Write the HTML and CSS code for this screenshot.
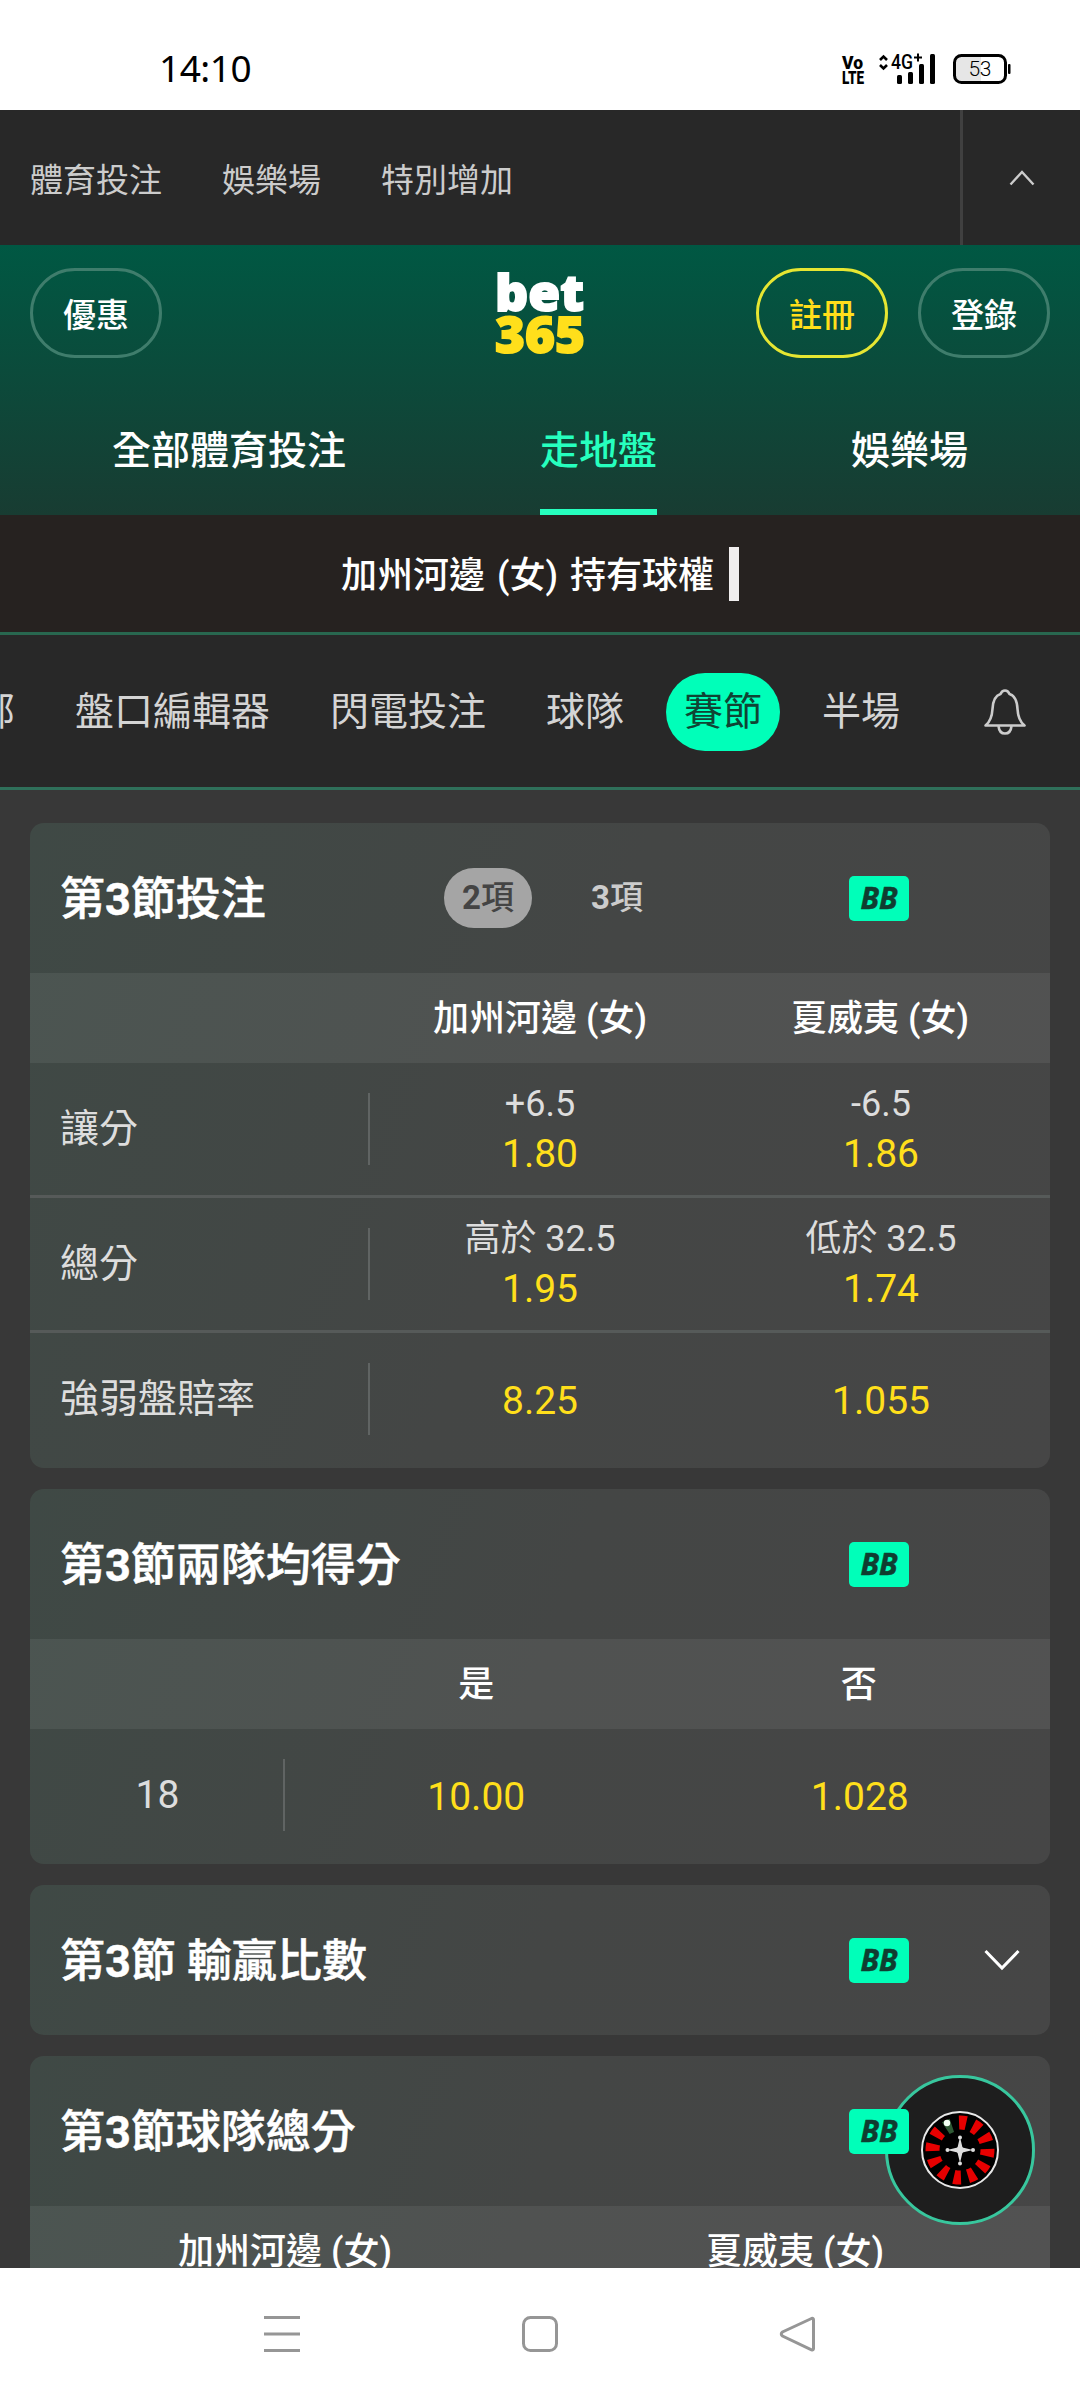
FILE: index.html
```html
<!DOCTYPE html>
<html lang="zh-Hant">
<head>
  <meta charset="UTF-8" />
  <title>bet365 走地盤</title>
  <link rel="stylesheet" href="styles.css">
</head>
<body>
  <div class="status-bar">
    <span class="time">14:10</span>
    <svg class="status-icons" width="170" height="34" viewBox="0 0 170 34">
      <g font-family="Roboto" font-weight="900" font-size="19">
        <text x="1" y="17" textLength="21" lengthAdjust="spacingAndGlyphs">Vo</text>
        <text x="1" y="32" textLength="22" lengthAdjust="spacingAndGlyphs">LTE</text>
      </g>
      <path d="M39 8l3.500-3.500 3.500 3.500M39 13l3.500 3.500 3.500-3.500" fill="none" stroke="#000" stroke-width="2.600" />
      <text x="50" y="17" font-family="Roboto" font-weight="500" font-size="20" textLength="22" lengthAdjust="spacingAndGlyphs">4G</text>
      <path d="M77 1.500v8M73 5.500h8" stroke="#000" stroke-width="2" />
      <rect x="56" y="23" width="5" height="9" rx="1.500" />
      <rect x="67" y="20" width="5" height="12" rx="1.500" />
      <rect x="78" y="12" width="5" height="20" rx="1.500" />
      <rect x="89" y="2" width="5" height="30" rx="1.500" />
      <path d="M120 4h20v26h-20q-5 0-5-5v-16q0-5 5-5z" fill="#e6e6e6" />
      <rect x="113.500" y="3.500" width="51" height="27" rx="7" fill="none" stroke="#000" stroke-width="3" />
      <rect x="167" y="12" width="2.500" height="10" rx="1" />
      <text x="127.500" y="24" font-family="Roboto" font-weight="300" font-size="21" textLength="23">53</text>
    </svg>
  </div>

  <nav class="site-nav">
    <a class="site-link">體育投注</a>
    <a class="site-link">娛樂場</a>
    <a class="site-link">特別增加</a>
    <div class="site-toggle">
      <svg width="26" height="16" viewBox="0 0 26 16"><path d="M1.500 14.500L13 2l11.500 12.500" fill="none" stroke="#ccc" stroke-width="2.400" /></svg>
    </div>
  </nav>

  <header class="header">
    <div class="header-top">
      <button class="btn">優惠</button>
      <svg class="logo" width="92" height="90" viewBox="0 0 92 90">
        <text x="1" y="42.500" fill="#fff" stroke="#fff" textLength="89" lengthAdjust="spacingAndGlyphs">bet</text>
        <text x="1" y="84.500" fill="#ffdf1b" stroke="#ffdf1b" textLength="90" lengthAdjust="spacingAndGlyphs">365</text>
      </svg>
      <div class="account">
        <button class="btn btn-join">註冊</button>
        <button class="btn">登錄</button>
      </div>
    </div>
    <div class="tabs">
      <a class="tab">全部體育投注</a>
      <a class="tab active">走地盤</a>
      <a class="tab">娛樂場</a>
    </div>
  </header>

  <div class="ticker">
    <span class="ticker-text">加州河邊 (女) 持有球權</span>
    <span class="cursor"></span>
  </div>

  <nav class="markets-nav">
    <a class="market-link">全部</a>
    <a class="market-link">盤口編輯器</a>
    <a class="market-link">閃電投注</a>
    <a class="market-link">球隊</a>
    <a class="market-link active">賽節</a>
    <a class="market-link">半場</a>
    <svg class="bell" width="42" height="46" viewBox="0 0 42 46">
      <path d="M1.500 36.500C6 33 8 29 8.500 20 9 10.500 11.500 6.500 16.500 5 17.500 2.500 19 1.500 21 1.500s3.500 1 4.500 3.500c5 1.500 7.500 5.500 8 15 .5 9 2.500 13 7 16.500z" />
      <path d="M14.500 37c.5 5 3 7.500 6.500 7.500s6-2.500 6.500-7.500" />
    </svg>
  </nav>

  <main class="markets">
    <section class="card">
      <div class="card-head">
        <h2>第<b>3</b>節投注</h2>
        <div class="switch">
          <span class="option selected"><b>2</b>項</span>
          <span class="option"><b>3</b>項</span>
        </div>
        <span class="bb">BB</span>
      </div>
      <div class="row row-head">
        <span></span>
        <span>加州河邊 (女)</span>
        <span>夏威夷 (女)</span>
      </div>
      <div class="row line">
        <div class="label">讓分</div>
        <div class="cell"><span class="handicap">+6.5</span><span class="odds">1.80</span></div>
        <div class="cell"><span class="handicap">-6.5</span><span class="odds">1.86</span></div>
      </div>
      <div class="row line">
        <div class="label">總分</div>
        <div class="cell"><span class="handicap">高於 32.5</span><span class="odds">1.95</span></div>
        <div class="cell"><span class="handicap">低於 32.5</span><span class="odds">1.74</span></div>
      </div>
      <div class="row">
        <div class="label">強弱盤賠率</div>
        <div class="cell"><span class="odds">8.25</span></div>
        <div class="cell"><span class="odds">1.055</span></div>
      </div>
    </section>

    <section class="card">
      <div class="card-head">
        <h2>第<b>3</b>節兩隊均得分</h2>
        <span class="bb">BB</span>
      </div>
      <div class="row row-head narrow">
        <span></span>
        <span>是</span>
        <span>否</span>
      </div>
      <div class="row narrow">
        <div class="label center">18</div>
        <div class="cell"><span class="odds">10.00</span></div>
        <div class="cell"><span class="odds">1.028</span></div>
      </div>
    </section>

    <section class="card">
      <div class="card-head">
        <h2>第<b>3</b>節 輸贏比數</h2>
        <span class="bb">BB</span>
        <svg class="expand" width="36" height="22" viewBox="0 0 36 22"><path d="M1.500 2L18 19 34.500 2" fill="none" stroke="#fff" stroke-width="3" /></svg>
      </div>
    </section>

    <section class="card">
      <div class="card-head">
        <h2>第<b>3</b>節球隊總分</h2>
        <span class="bb">BB</span>
      </div>
      <div class="row row-head two">
        <span>加州河邊 (女)</span>
        <span>夏威夷 (女)</span>
      </div>
    </section>
  </main>

  <!-- floating casino button -->
  <div class="roulette">
    <svg width="80" height="80" viewBox="-40 -40 80 80">
      <circle r="38" fill="#000" stroke="#e8e8e8" stroke-width="2" />
      <circle r="27.500" fill="none" stroke="#e60000" stroke-width="14" pathLength="12" stroke-dasharray=".5 .5" transform="rotate(-2)" />
      <circle r="27.500" fill="none" stroke="#000" stroke-width="15" pathLength="12" stroke-dasharray=".9 11.100" transform="rotate(232)" />
      <circle r="26" fill="none" stroke="#2f5a35" stroke-width="14" pathLength="12" stroke-dasharray=".5 11.500" transform="rotate(237)" />
      <circle cx="-13" cy="-27" r="3.200" fill="#f4fff4" />
      <path d="M0-13L2.500-2.500 13 0 2.500 2.500 0 13-2.500 2.500-13 0-2.500-2.500z" fill="#ddd" />
      <g fill="#ddd">
        <circle cy="-12.500" r="2" />
        <circle cy="13.500" r="2" />
        <circle cx="-12.500" r="2" />
        <circle cx="13" r="2" />
        <circle r="3.500" />
      </g>
    </svg>
  </div>

  <footer class="system-nav">
    <svg width="36" height="36" viewBox="0 0 36 36"><path d="M0 1.500h36M0 18h36M0 34.500h36" /></svg>
    <svg width="36" height="36" viewBox="0 0 36 36"><rect x="1.500" y="1.500" width="33" height="33" rx="7" /></svg>
    <svg width="36" height="36" viewBox="0 0 36 36"><path d="M31.500 2.500L2.500 16q-2.500 2 0 4L31.500 33.800q2 .7 2-1.300V3.800q0-2-2-1.300z" /></svg>
  </footer>
</body>
</html>
```

FILE: styles.css
```css
* {
  box-sizing: border-box;
}

body {
  margin: 0;
  width: 1080px;
  height: 2400px;
  overflow: hidden;
  display: flex;
  flex-direction: column;
  background-color: #383838;
  font-family: Roboto, "Noto Sans CJK TC", sans-serif;
  color: #fff;
}

svg {
  display: block;
  overflow: visible;
}

b {
  font-weight: 700;
}

.status-bar {
  flex: none;
  height: 110px;
  padding: 28px 69px 0 159px;
  display: flex;
  justify-content: space-between;
  align-items: center;
  background-color: #fff;
  color: #000;
}

.time {
  padding-bottom: 4px;
  font-family: "Noto Sans", sans-serif;
  font-size: 37px;
  letter-spacing: -0.5px;
}

.site-nav {
  flex: none;
  height: 135px;
  padding-left: 30px;
  display: flex;
  align-items: center;
  gap: 60px;
  background-color: #282828;
  color: #ccc;
  font-size: 33px;
}

.site-toggle {
  width: 120px;
  height: 135px;
  margin-left: auto;
  border-left: 3px solid #404040;
  display: flex;
  align-items: center;
  justify-content: center;
}

.header {
  flex: none;
  height: 270px;
  padding-top: 23px;
  display: flex;
  flex-direction: column;
  justify-content: space-between;
  background: linear-gradient(#005843, #183c32);
}

.header-top {
  padding: 0 30px;
  display: grid;
  grid-template-columns: 1fr 92px 1fr;
}

.btn {
  width: 132px;
  height: 90px;
  padding: 0 0 1px;
  border: 3px solid #3f7d6c;
  border-radius: 45px;
  background: none;
  color: #fff;
  font-family: inherit;
  font-size: 33px;
  font-weight: 500;
}

.btn-join {
  border-color: #e6e632;
  color: #ffdf1b;
}

.logo {
  font-family: "Open Sans", sans-serif;
  font-size: 50px;
  font-weight: 800;
  stroke-width: 1.800;
}

.account {
  display: flex;
  justify-content: flex-end;
  gap: 30px;
}

.tabs {
  padding: 0 112px;
  display: flex;
  justify-content: space-between;
}

.tab {
  height: 130px;
  line-height: 132px;
  font-size: 39px;
  font-weight: 500;
}

.tab.active {
  color: #26ffbe;
  border-bottom: 6px solid #26ffbe;
}

.ticker {
  flex: none;
  height: 120px;
  display: flex;
  align-items: center;
  justify-content: center;
  gap: 15px;
  background-color: #262220;
  border-bottom: 3px solid #28674f;
  font-size: 36px;
  font-weight: 500;
}

.ticker-text {
  padding-bottom: 3px;
  word-spacing: 3px;
}

.cursor {
  width: 10px;
  height: 54px;
  background-color: #f0eeee;
}

.markets-nav {
  flex: none;
  height: 155px;
  padding: 2px 54px 0 0;
  margin-left: -81px;
  display: flex;
  align-items: center;
  gap: 24px;
  background-color: #282828;
  border-bottom: 3px solid #2f705a;
  color: #d4d4d4;
  font-size: 39px;
}

.market-link {
  height: 78px;
  line-height: 78px;
  padding: 0 18px;
  border-radius: 39px;
}

.market-link.active {
  background-color: #00ffb9;
  color: #0f4434;
}

.bell {
  margin-left: auto;
  fill: none;
  stroke: #ccc;
  stroke-width: 2.600;
  stroke-linejoin: round;
}

.markets {
  height: 1478px;
  padding: 33px 30px 0;
  overflow: hidden;
  display: flex;
  flex-direction: column;
  gap: 21px;
}

.card {
  flex: none;
  border-radius: 14px;
  background: linear-gradient(110deg, #3f4945, #444645 50%, #464646);
  overflow: hidden;
}

.card-head {
  position: relative;
  height: 150px;
  padding: 0 30px;
  display: flex;
  align-items: center;
}

.card-head h2 {
  width: 384px;
  margin: 0;
  padding-bottom: 5px;
  font-size: 45px;
  font-weight: 500;
  -webkit-text-stroke: 0.5px;
  white-space: nowrap;
}

.switch {
  display: flex;
  gap: 41px;
  font-size: 33px;
  font-weight: 500;
  color: #ccc;
}

.option {
  height: 60px;
  line-height: 60px;
  padding: 0 18px;
  border-radius: 30px;
}

.option.selected {
  background-color: #a5a5a5;
  color: #444;
}

.bb {
  width: 60px;
  height: 45px;
  margin-left: auto;
  margin-right: 111px;
  border-radius: 5px;
  background-color: #00ffb9;
  color: #0f3d30;
  font-family: "Open Sans", sans-serif;
  font-size: 30px;
  font-weight: 700;
  font-style: italic;
  line-height: 44px;
  text-align: center;
  -webkit-text-stroke: 0.5px;
}

.expand {
  position: absolute;
  right: 30px;
  top: 64px;
}

.row {
  height: 135px;
  display: grid;
  grid-template-columns: 1fr 1fr 1fr;
}

.row.narrow {
  grid-template-columns: 2fr 3fr 3fr;
}

.row.two {
  grid-template-columns: 1fr 1fr;
}

.row.line {
  border-bottom: 3px solid #565a59;
}

.row-head {
  height: 90px;
  line-height: 92px;
  background-color: rgba(255, 255, 255, 0.065);
  font-size: 36px;
  font-weight: 500;
  text-align: center;
}

.label {
  height: 72px;
  margin-top: 30px;
  padding-left: 30px;
  line-height: 72px;
  border-right: 2px solid #606463;
  color: #ddd;
  font-size: 39px;
}

.label.center {
  padding: 0 0 0 2px;
  text-align: center;
}

.cell {
  display: flex;
  flex-direction: column;
  align-items: center;
  justify-content: center;
}

.cell:last-child {
  padding-left: 2px;
}

.handicap {
  color: #ddd;
  font-size: 36px;
  line-height: 50px;
}

.odds {
  color: #ffdf1b;
  font-size: 39px;
  line-height: 50px;
}

.roulette {
  position: absolute;
  left: 885px;
  top: 2075px;
  width: 150px;
  height: 150px;
  border: 3px solid #38c79e;
  border-radius: 50%;
  background-color: #1e1e1e;
  display: flex;
  align-items: center;
  justify-content: center;
}

/* badge of the last card stays above the floating button */
.card:last-child .bb {
  position: relative;
  z-index: 2;
}

.system-nav {
  flex: none;
  height: 132px;
  display: flex;
  align-items: center;
  justify-content: center;
  gap: 222px;
  background-color: #fff;
}

.system-nav svg {
  fill: none;
  stroke: #969696;
  stroke-width: 3;
}
```
